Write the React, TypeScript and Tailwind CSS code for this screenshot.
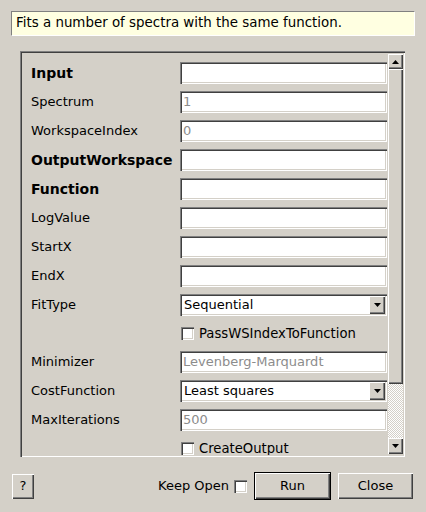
import React from "react";

type Row =
  | { kind: "text"; label: string; bold?: boolean; value?: string; disabled?: boolean }
  | { kind: "select"; label: string; value: string }
  | { kind: "check"; label: string };

const rows: Row[] = [
  { kind: "text", label: "Input", bold: true },
  { kind: "text", label: "Spectrum", value: "1", disabled: true },
  { kind: "text", label: "WorkspaceIndex", value: "0", disabled: true },
  { kind: "text", label: "OutputWorkspace", bold: true },
  { kind: "text", label: "Function", bold: true },
  { kind: "text", label: "LogValue" },
  { kind: "text", label: "StartX" },
  { kind: "text", label: "EndX" },
  { kind: "select", label: "FitType", value: "Sequential" },
  { kind: "check", label: "PassWSIndexToFunction" },
  { kind: "text", label: "Minimizer", value: "Levenberg-Marquardt", disabled: true },
  { kind: "select", label: "CostFunction", value: "Least squares" },
  { kind: "text", label: "MaxIterations", value: "500", disabled: true },
  { kind: "check", label: "CreateOutput" },
];

const sunken =
  "shadow-[inset_1px_1px_0_#808080,inset_2px_2px_0_#404040,inset_-1px_-1px_0_#ffffff,inset_-2px_-2px_0_#d4d0c8]";
const raised =
  "shadow-[inset_1px_1px_0_#ffffff,inset_-1px_-1px_0_#404040,inset_-2px_-2px_0_#808080]";

const Arrow = ({ up }: { up?: boolean }) => (
  <svg width="7" height="4" viewBox="0 0 7 4">
    <path d={up ? "M0 4 L3.5 0 L7 4 Z" : "M0 0 L7 0 L3.5 4 Z"} fill="#000" />
  </svg>
);

const CheckBox = () => (
  <div className={`w-[13px] h-[13px] bg-white shrink-0 ${sunken}`} />
);

const App = () => {
  return (
    <div className="w-[426px] h-[512px] bg-[#d4d0c8] font-['DejaVu_Sans',sans-serif] text-[13px] text-black overflow-hidden flex flex-col">
      <div className="mt-[11px] ml-[11px] w-[404px] h-[25px] bg-[#ffffe1] border border-t-[#808080] border-l-[#808080] border-b-[#ffffff] border-r-[#ffffff] flex items-center pl-[4px] text-[13.4px]">
        Fits a number of spectra with the same function.
      </div>

      <div
        className={`mt-[15px] ml-[20px] w-[385px] h-[406px] p-[2px] flex ${sunken}`}
      >
        <div className="w-[366px] h-full overflow-hidden pl-[9px] pt-[9px] flex flex-col gap-[7px]">
          {rows.map((row) => {
            if (row.kind === "check") {
              return (
                <div key={row.label} className="flex items-center h-[21px] shrink-0">
                  <div className="w-[149px] shrink-0" />
                  <div className="ml-[1px]">
                    <CheckBox />
                  </div>
                  <span className="ml-[5px] text-[13.2px]">{row.label}</span>
                </div>
              );
            }
            return (
              <div key={row.label} className="flex items-center h-[22px] shrink-0">
                <span
                  className={`w-[149px] shrink-0 ${row.kind === "text" && row.bold ? "font-bold text-[14px]" : ""}`}
                >
                  {row.label}
                </span>
                {row.kind === "select" ? (
                  <div
                    className={`w-[207px] h-[22px] bg-white flex items-center pl-[4px] pr-[2px] ${sunken}`}
                  >
                    <span className="flex-1">{row.value}</span>
                    <div
                      className={`w-[16px] h-[18px] bg-[#d4d0c8] flex items-center justify-center ${raised}`}
                    >
                      <Arrow />
                    </div>
                  </div>
                ) : (
                  <div
                    className={`w-[207px] h-[22px] bg-white flex items-center pl-[3px] text-[#8c8c8c] ${sunken}`}
                  >
                    {row.value}
                  </div>
                )}
              </div>
            );
          })}
        </div>

        <div className="w-[15px] h-full flex flex-col">
          <div
            className={`h-[15px] mt-[1px] bg-[#d4d0c8] flex items-center justify-center ${raised}`}
          >
            <Arrow up />
          </div>
          <div className={`h-[315px] bg-[#d4d0c8] ${raised}`} />
          <div className="flex-1 bg-[image:repeating-conic-gradient(#ffffff_0_25%,#d4d0c8_0_50%)] bg-[length:2px_2px]" />
          <div
            className={`h-[16px] mb-[1px] bg-[#d4d0c8] flex items-center justify-center ${raised}`}
          >
            <Arrow />
          </div>
        </div>
      </div>

      <div className="mt-[15px] flex items-center">
        <button
          className={`ml-[12px] w-[22px] h-[25px] bg-[#d4d0c8] ${raised}`}
        >
          ?
        </button>
        <span className="ml-auto">Keep Open</span>
        <div className="ml-[5px]">
          <CheckBox />
        </div>
        <button
          className={`ml-[7px] w-[77px] h-[28px] bg-[#d4d0c8] border border-black ${raised}`}
        >
          Run
        </button>
        <button
          className={`ml-[7px] mr-[13px] w-[75px] h-[26px] bg-[#d4d0c8] ${raised}`}
        >
          Close
        </button>
      </div>
    </div>
  );
};

export default App;
